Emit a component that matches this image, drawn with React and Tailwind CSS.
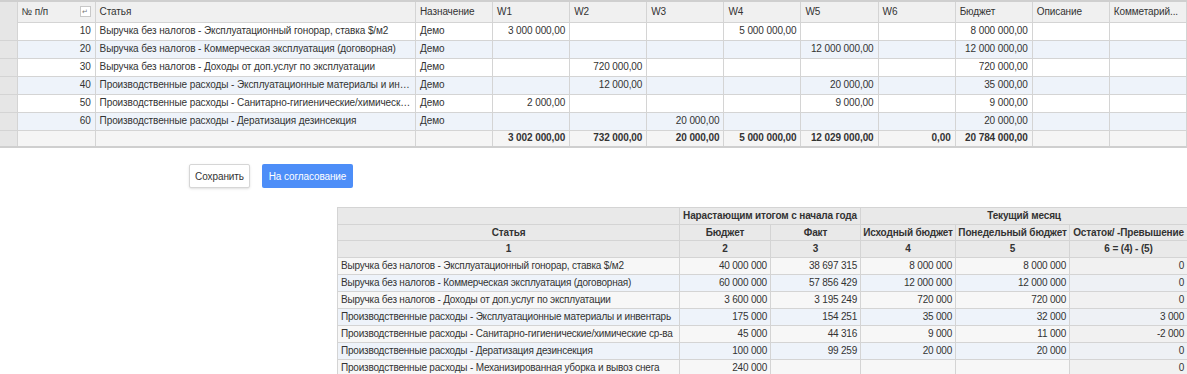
import React from "react";

const font = { fontFamily: '"Liberation Sans", Arial, sans-serif' };

const weeks = ["W1", "W2", "W3", "W4", "W5", "W6"];

const rows = [
    { n: 10, name: "Выручка без налогов - Эксплуатационный гонорар, ставка $/м2", w: ["3 000 000,00", "", "", "5 000 000,00", "", ""], budget: "8 000 000,00" },
    { n: 20, name: "Выручка без налогов - Коммерческая эксплуатация (договорная)", w: ["", "", "", "", "12 000 000,00", ""], budget: "12 000 000,00" },
    { n: 30, name: "Выручка без налогов - Доходы от доп.услуг по эксплуатации", w: ["", "720 000,00", "", "", "", ""], budget: "720 000,00" },
    { n: 40, name: "Производственные расходы - Эксплуатационные материалы и инвентарь", w: ["", "12 000,00", "", "", "20 000,00", ""], budget: "35 000,00" },
    { n: 50, name: "Производственные расходы - Санитарно-гигиенические/химические ср-ва", w: ["2 000,00", "", "", "", "9 000,00", ""], budget: "9 000,00" },
    { n: 60, name: "Производственные расходы - Дератизация дезинсекция", w: ["", "", "20 000,00", "", "", ""], budget: "20 000,00" },
];

const totals = ["3 002 000,00", "732 000,00", "20 000,00", "5 000 000,00", "12 029 000,00", "0,00"];

const report = [
    ["Выручка без налогов - Эксплуатационный гонорар, ставка $/м2", "40 000 000", "38 697 315", "8 000 000", "8 000 000", "0"],
    ["Выручка без налогов - Коммерческая эксплуатация (договорная)", "60 000 000", "57 856 429", "12 000 000", "12 000 000", "0"],
    ["Выручка без налогов - Доходы от доп.услуг по эксплуатации", "3 600 000", "3 195 249", "720 000", "720 000", "0"],
    ["Производственные расходы - Эксплуатационные материалы и инвентарь", "175 000", "154 251", "35 000", "32 000", "3 000"],
    ["Производственные расходы - Санитарно-гигиенические/химические ср-ва", "45 000", "44 316", "9 000", "11 000", "-2 000"],
    ["Производственные расходы - Дератизация дезинсекция", "100 000", "99 259", "20 000", "20 000", "0"],
    ["Производственные расходы - Механизированная уборка и вывоз снега", "240 000", "", "", "", "0"],
];

const td = "border border-[#d4d4d4] px-1 py-0 leading-[14px] truncate whitespace-nowrap overflow-hidden";
const rc = "border border-[#d4d4d4] px-[3px] py-0 leading-[14px] whitespace-nowrap overflow-hidden";
const hc = "border border-[#d4d4d4] px-[2px] py-0 leading-[14px] whitespace-nowrap overflow-hidden text-center tracking-[-0.15px]";

const App = () => {
    return (
        <div className="w-[1187px] h-[374px] bg-white text-[10px] tracking-[-0.1px] text-[#333] overflow-hidden" style={font}>
            {/* Grid */}
            <table className="w-[1187px] table-fixed border-collapse border-t-2 border-b-2 border-[#cfcfcf]">
                <colgroup>
                    <col className="w-[17px]" />
                    <col className="w-[78px]" />
                    <col className="w-[320px]" />
                    <col className="w-[77px]" />
                    {weeks.map((w) => (
                        <col key={w} className="w-[77px]" />
                    ))}
                    <col className="w-[77px]" />
                    <col className="w-[77px]" />
                    <col className="w-[77px]" />
                </colgroup>
                <thead>
                    <tr className="h-[21px] bg-[#f0f0f0]">
                        <th className="border-r border-[#d4d4d4] bg-[#e6e6e6]" />
                        <th className={`${td} font-normal text-left`}>
                            <div className="flex items-center justify-between">
                                <span>№ п/п</span>
                                <span className="w-[11px] h-[11px] border border-[#c8c8c8] bg-white text-[7px] leading-[9px] text-center text-[#777]">↵</span>
                            </div>
                        </th>
                        <th className={`${td} font-normal text-left`}>Статья</th>
                        <th className={`${td} font-normal text-left`}>Назначение</th>
                        {weeks.map((w) => (
                            <th key={w} className={`${td} font-normal text-left`}>{w}</th>
                        ))}
                        <th className={`${td} font-normal text-left`}>Бюджет</th>
                        <th className={`${td} font-normal text-left`}>Описание</th>
                        <th className={`${td} font-normal text-left`}>Комметарий...</th>
                    </tr>
                </thead>
                <tbody>
                    {rows.map((r, i) => (
                        <tr key={r.n} className={`h-[18px] ${i % 2 ? "bg-[#eef3fa]" : "bg-white"}`}>
                            <td className="border-r border-b border-[#d4d4d4] bg-[#e6e6e6]" />
                            <td className={`${td} text-right`}>{r.n}</td>
                            <td className={`${td} text-ellipsis`}>{r.name}</td>
                            <td className={td}>Демо</td>
                            {r.w.map((v, j) => (
                                <td key={j} className={`${td} text-right`}>{v}</td>
                            ))}
                            <td className={`${td} text-right`}>{r.budget}</td>
                            <td className={td} />
                            <td className={td} />
                        </tr>
                    ))}
                    <tr className="h-[17px] bg-[#f5f5f5] font-bold">
                        <td className="border-r border-[#d4d4d4] bg-[#e6e6e6]" />
                        <td className={td} />
                        <td className={td} />
                        <td className={td} />
                        {totals.map((v, j) => (
                            <td key={j} className={`${td} text-right`}>{v}</td>
                        ))}
                        <td className={`${td} text-right`}>20 784 000,00</td>
                        <td className={td} />
                        <td className={td} />
                    </tr>
                </tbody>
            </table>

            {/* Buttons */}
            <div className="flex gap-[12px] ml-[189px] mt-[16px]">
                <button className="h-[24px] w-[61px] border border-[#d6d6d6] rounded-[2px] bg-white text-[10px] text-[#333] shadow-sm">
                    Сохранить
                </button>
                <button className="h-[24px] w-[91px] rounded-[2px] bg-[#4d8ef8] text-[10px] text-white">
                    На согласование
                </button>
            </div>

            {/* Report */}
            <table className="ml-[337px] mt-[19px] w-[850px] table-fixed border-collapse text-[10px] tracking-[-0.2px]">
                <colgroup>
                    <col className="w-[342px]" />
                    <col className="w-[91px]" />
                    <col className="w-[90px]" />
                    <col className="w-[95px]" />
                    <col className="w-[114px]" />
                    <col className="w-[118px]" />
                </colgroup>
                <thead className="bg-[#e9e9e9] font-bold">
                    <tr className="h-[17px]">
                        <th className={hc} />
                        <th colSpan={2} className={hc}>Нарастающим итогом с начала года</th>
                        <th colSpan={3} className={hc}>Текущий месяц</th>
                    </tr>
                    <tr className="h-[16px]">
                        <th className={hc}>Статья</th>
                        <th className={hc}>Бюджет</th>
                        <th className={hc}>Факт</th>
                        <th className={hc}>Исходный бюджет</th>
                        <th className={hc}>Понедельный бюджет</th>
                        <th className={hc}>Остаток/ -Превышение</th>
                    </tr>
                    <tr className="h-[17px]">
                        <th className={hc}>1</th>
                        <th className={hc}>2</th>
                        <th className={hc}>3</th>
                        <th className={hc}>4</th>
                        <th className={hc}>5</th>
                        <th className={hc}>6 = (4) - (5)</th>
                    </tr>
                </thead>
                <tbody>
                    {report.map((r, i) => (
                        <tr key={i} className={`h-[17px] ${i % 2 ? "bg-[#eef3fa]" : "bg-[#f7f7f7]"}`}>
                            <td className={rc}>{r[0]}</td>
                            {r.slice(1, 5).map((v, j) => (
                                <td key={j} className={`${rc} text-right`}>{v}</td>
                            ))}
                            <td className={`${rc} text-right ${i % 2 ? "bg-[#eef1f5]" : "bg-[#f1f1f1]"}`}>{r[5]}</td>
                        </tr>
                    ))}
                </tbody>
            </table>
        </div>
    );
};

export default App;
